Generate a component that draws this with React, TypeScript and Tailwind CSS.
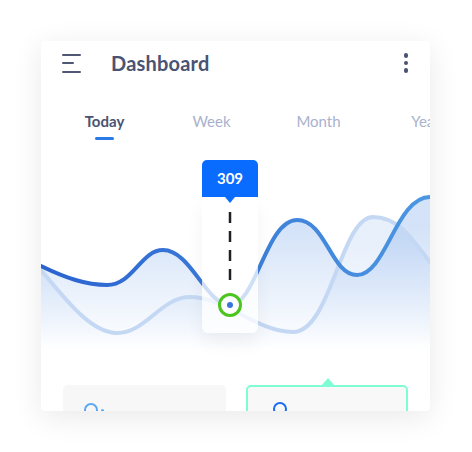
import React from "react"

const mainPath =
    "M0,116 C25,128 45,135 66,135 C92,135 100,100 122,100 C150,100 165,155 189,155 C215,155 225,70 256,70 C285,70 290,125 316,125 C345,125 355,47 389,47"
const softPath =
    "M0,120 C25,150 50,183 76,183 C105,183 120,147 149,147 C185,147 215,182 252,182 C290,182 300,67 332,67 C360,67 375,95 389,112"

const tabs = [
    { label: "Today", active: true },
    { label: "Week", active: false },
    { label: "Month", active: false },
    { label: "Year", active: false },
]

function Chart() {
    return (
        <div className="relative h-[200px] w-full">
            <svg width="389" height="200" viewBox="0 0 389 200" className="block">
                <defs>
                    <linearGradient id="area" x1="0" y1="0" x2="0" y2="1">
                        <stop offset="0.2" stopColor="#3b7fe0" stopOpacity="0.22" />
                        <stop offset="1" stopColor="#3b7fe0" stopOpacity="0" />
                    </linearGradient>
                    <linearGradient id="line" x1="0" y1="0" x2="1" y2="0">
                        <stop offset="0" stopColor="#2a62cf" />
                        <stop offset="1" stopColor="#4c97e2" />
                    </linearGradient>
                </defs>
                <path d={`${softPath} L389,200 L0,200 Z`} fill="url(#area)" opacity="0.55" />
                <path d={`${mainPath} L389,200 L0,200 Z`} fill="url(#area)" />
                <path d={softPath} fill="none" stroke="#c4d8f3" strokeWidth="4" strokeLinecap="round" />
                <path d={mainPath} fill="none" stroke="url(#line)" strokeWidth="4" strokeLinecap="round" />
            </svg>

            {/* Tooltip */}
            <div className="absolute left-[161px] top-[10px] w-[56px]">
                <div className="flex h-[37px] items-center justify-center rounded-t-[5px] bg-[#0a6bff] text-[15px] font-bold text-white">
                    309
                </div>
                <div className="relative h-[136px] rounded-b-[6px] bg-white/75 shadow-[0_10px_18px_rgba(0,0,0,0.05)]">
                    <div className="absolute left-[23px] top-0 h-0 w-0 border-x-[5px] border-t-[6px] border-x-transparent border-t-[#0a6bff]" />
                    <svg width="56" height="136" viewBox="0 0 56 136" className="absolute inset-0">
                        <line x1="28" y1="15" x2="28" y2="90" stroke="#1f2024" strokeWidth="2.5" strokeDasharray="11 8" />
                    </svg>
                    <div className="absolute left-[16px] top-[96px] flex h-[24px] w-[24px] items-center justify-center rounded-full border-[3px] border-[#4cc51e] bg-white">
                        <div className="h-[6px] w-[6px] rounded-full bg-[#3a76d8]" />
                    </div>
                </div>
            </div>
        </div>
    )
}

export default function App() {
    return (
        <div className="min-h-[452px] w-[472px] bg-white pl-[41px] pt-[41px] font-['Lato',sans-serif]">
            <div className="h-[370px] w-[389px] overflow-hidden rounded-[4px] bg-white shadow-[0_6px_30px_rgba(0,0,0,0.09)]">
                {/* Header */}
                <div className="flex h-[44px] items-center pl-[21px] pr-[22px]">
                    <div className="flex w-[19px] flex-col gap-[6.5px]">
                        <div className="h-[2px] w-[19px] rounded bg-[#4f5774]" />
                        <div className="h-[2px] w-[12px] rounded bg-[#4f5774]" />
                        <div className="h-[2px] w-[19px] rounded bg-[#4f5774]" />
                    </div>
                    <h1 className="ml-[30px] text-[20px] font-bold tracking-[0.2px] text-[#4a5373]">Dashboard</h1>
                    <div className="ml-auto flex flex-col gap-[3px]">
                        <span className="h-[4.5px] w-[4.5px] rounded-full bg-[#4a5373]" />
                        <span className="h-[4.5px] w-[4.5px] rounded-full bg-[#4a5373]" />
                        <span className="h-[4.5px] w-[4.5px] rounded-full bg-[#4a5373]" />
                    </div>
                </div>

                {/* Tabs */}
                <div className="flex whitespace-nowrap pl-[10px] pt-[26px]">
                    {tabs.map((t) => (
                        <div key={t.label} className="flex w-[107px] shrink-0 flex-col items-center">
                            <span
                                className={
                                    t.active
                                        ? "text-[15px] leading-[20px] font-bold text-[#4a5373]"
                                        : "text-[15px] leading-[20px] text-[#a9b2cd]"
                                }
                            >
                                {t.label}
                            </span>
                            <div className={t.active ? "mt-[6px] h-[3px] w-[19px] rounded-full bg-[#2b7be5]" : "mt-[6px] h-[3px]"} />
                        </div>
                    ))}
                </div>

                <div className="mt-[10px]">
                    <Chart />
                </div>

                {/* Stat cards */}
                <div className="mt-[35px] flex gap-[20px] px-[22px]">
                    <div className="h-[80px] w-[163px] rounded-[5px] bg-[#f7f7f8] pl-[21px] pt-[18px]">
                        <div className="flex items-center gap-[3px]">
                            <div className="h-[14px] w-[14px] rounded-full border-[2px] border-[#5aa8f5]" />
                            <div className="h-[3px] w-[3px] rounded-full bg-[#5aa8f5]" />
                        </div>
                    </div>
                    <div className="relative h-[80px] w-[162px] rounded-[5px] border-[2px] border-[#7ffcd3] bg-[#f8f8f9] pl-[25px] pt-[15px]">
                        <div className="absolute -top-[9px] left-[73px] h-0 w-0 border-x-[7px] border-b-[8px] border-x-transparent border-b-[#7ffcd3]" />
                        <div className="h-[14px] w-[14px] rounded-full border-[2px] border-[#1a6cf0]" />
                    </div>
                </div>
            </div>
        </div>
    )
}
